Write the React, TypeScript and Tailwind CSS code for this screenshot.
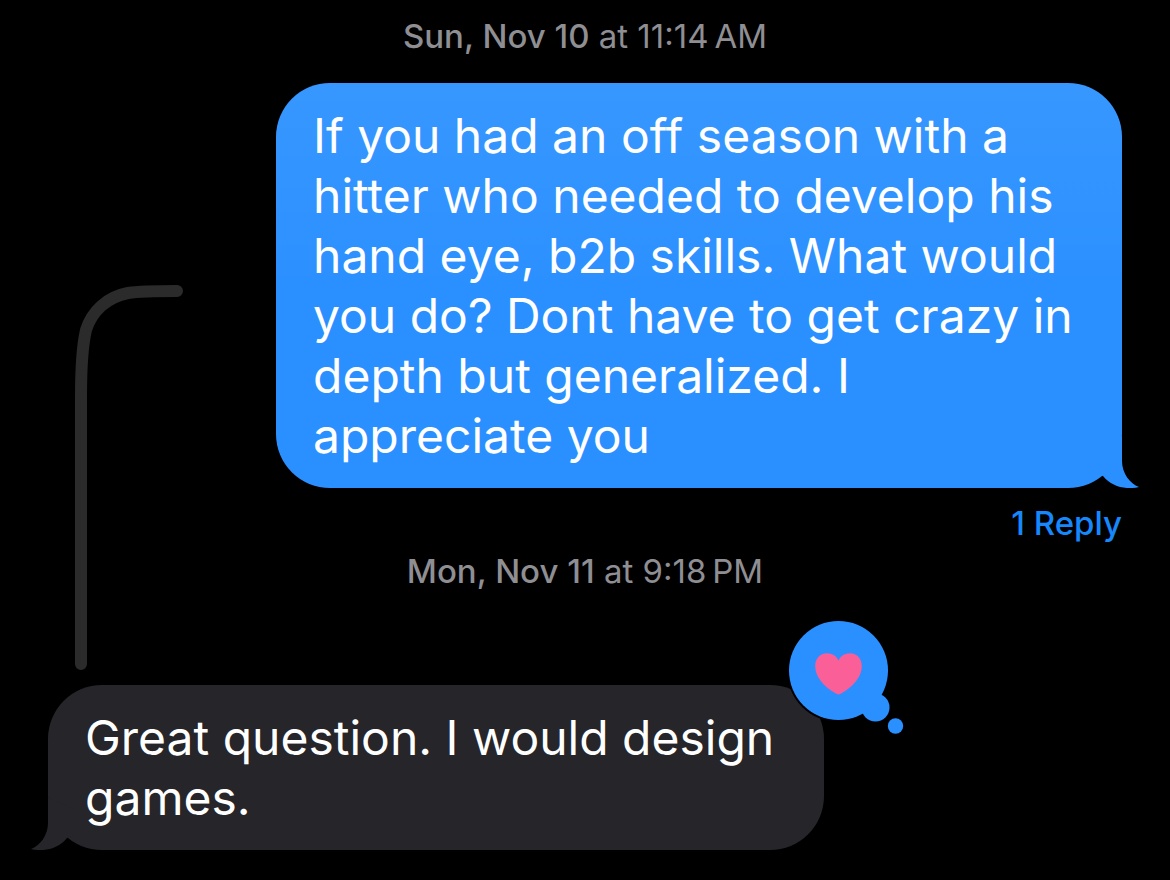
import type { ReactNode } from 'react';
import clsx from 'clsx';

function Timestamp({ day, time, className = '' }: { day: string; time: string; className?: string }) {
  return (
    <p className={clsx('text-center text-[33px] leading-10 text-[#8e8e93]', className)}>
      <span className="font-medium">{day}</span> at {time}
    </p>
  );
}

function Tail({ className }: { className: string }) {
  return (
    <svg
      viewBox="0 0 60 60"
      aria-hidden="true"
      className={clsx('absolute bottom-0 h-[60px] w-[60px]', className)}
    >
      <path d="M42 8 V33 C42 45 50 56 59 59 C46 62 32 59 23 48 L14 44 V20 Z" />
    </svg>
  );
}

function Bubble({
  sent = false,
  className = '',
  children,
}: {
  sent?: boolean;
  className?: string;
  children: ReactNode;
}) {
  return (
    <div
      className={clsx(
        'relative rounded-[54px] px-[37px] pt-[23px] pb-[22px] text-[48px] leading-[60px] text-white',
        sent ? 'self-end bg-linear-to-b from-[#3797ff] to-[#2b90ff] to-50%' : 'self-start bg-[#26252a]',
        className
      )}
    >
      <Tail className={sent ? '-right-[18px] fill-[#2b90ff]' : '-left-[18px] -scale-x-100 fill-[#26252a]'} />
      {children}
    </div>
  );
}

function HeartReaction() {
  return (
    <svg
      viewBox="0 0 120 120"
      role="img"
      aria-label="Loved"
      className="absolute -top-[66px] -right-[83px] h-[120px] w-[120px]"
    >
      <g fill="#000">
        <circle cx="51.5" cy="51.5" r="51.5" />
        <circle cx="88" cy="88" r="16" />
      </g>
      <g fill="#2b90ff">
        <circle cx="51.5" cy="51.5" r="49.5" />
        <circle cx="88.5" cy="88.5" r="14" />
        <circle cx="108.5" cy="107" r="7.7" />
      </g>
      <path
        fill="#fa5f98"
        d="M51.5 75.500 C50.500 75.500 49.500 75 48.500 74.300 C36 67 28.200 57.500 28.200 47 C28.200 39.500 33.300 34.300 40 34.300 C45.500 34.300 49.500 37.200 51.500 41.500 C53.500 37.200 57.500 34.300 63 34.300 C69.700 34.300 74.800 39.500 74.800 47 C74.800 57.500 67 67 54.500 74.300 C53.500 75 52.500 75.500 51.500 75.500 Z"
      />
    </svg>
  );
}

// line that joins the original message to its reply
function ThreadLine() {
  return (
    <svg
      viewBox="0 0 110 386"
      fill="none"
      aria-hidden="true"
      className="absolute top-[285px] left-[75px] h-[386px] w-[110px]"
    >
      <path
        d="M102 6 C80 6 66 6 53 8 C32 12 17 26 11 45 C7 62 6 82 6 112 V379"
        stroke="#2b2b2b"
        strokeWidth="12"
        strokeLinecap="round"
      />
    </svg>
  );
}

export default function App() {
  return (
    <main className="relative flex min-h-screen flex-col bg-black px-12 pt-4 pb-[30px] font-['Inter',sans-serif]">
      <ThreadLine />
      <Timestamp day="Sun, Nov 10" time={'11:14\u202fAM'} />
      <Bubble sent className="mt-[27px] max-w-[846px]">
        <p>
          If you had an off season with a hitter who needed to develop his hand eye, b2b skills. What would you
          do? Dont have to get crazy in depth but generalized. I appreciate you
        </p>
      </Bubble>
      <a href="#replies" className="mt-[15px] self-end text-[33px] leading-10 font-medium text-[#1688fc]">
        1 Reply
      </a>
      <Timestamp day="Mon, Nov 11" time={'9:18\u202fPM'} className="mt-2" />
      <Bubble className="mt-[94px] max-w-[776px]">
        <p>Great question. I would design games.</p>
        <HeartReaction />
      </Bubble>
    </main>
  );
}
